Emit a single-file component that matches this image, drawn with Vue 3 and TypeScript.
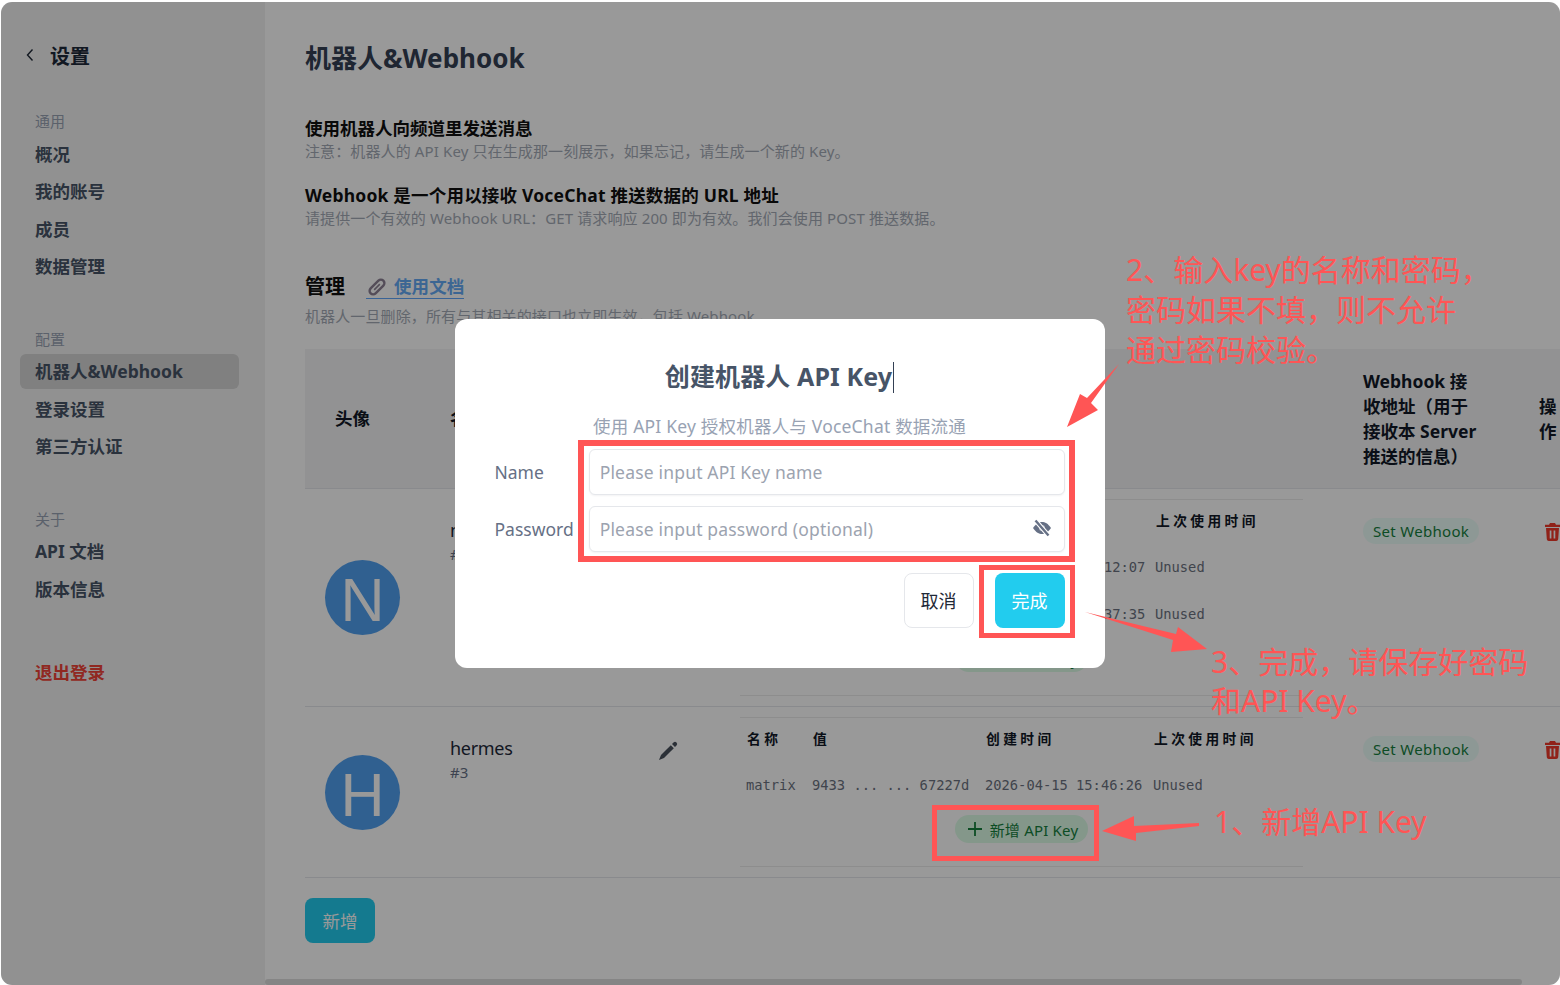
<template>
  <div class="page">
    <div class="window">
      <aside class="sidebar">
        <div class="back">
          <svg width="10" height="14" viewBox="0 0 10 14"><path d="M7.5 1.5 2.5 7l5 5.500" fill="none" stroke="#1f2937" stroke-width="1.400" /></svg>
          <span>设置</span>
        </div>
        <div v-for="group in navGroups" :key="group.title" class="nav-group">
          <div class="nav-title">{{ group.title }}</div>
          <div v-for="item in group.items" :key="item" class="nav-item" :class="{ active: item === '机器人&Webhook' }">{{ item }}</div>
        </div>
        <div class="logout">退出登录</div>
      </aside>

      <main class="main">
        <h1>机器人&amp;Webhook</h1>
        <section class="tip first">
          <h2>使用机器人向频道里发送消息</h2>
          <p>注意：机器人的 API Key 只在生成那一刻展示，如果忘记，请生成一个新的 Key。</p>
        </section>
        <section class="tip">
          <h2>Webhook 是一个用以接收 VoceChat 推送数据的 URL 地址</h2>
          <p>请提供一个有效的 Webhook URL：GET 请求响应 200 即为有效。我们会使用 POST 推送数据。</p>
        </section>
        <div class="manage">
          <h3>管理</h3>
          <a class="doc-link">
            <svg width="20" height="20" viewBox="0 0 20 20" fill="none" stroke="#8d8194" stroke-width="2.400">
              <g transform="rotate(-45 10 10)">
                <rect x="1" y="6.500" width="18" height="7" rx="3.500" />
                <path d="M6 10h8" stroke-width="1.600" />
              </g>
            </svg>
            <span>使用文档</span>
          </a>
        </div>
        <p class="manage-note">机器人一旦删除，所有与其相关的接口也立即生效，包括 Webhook。</p>

        <div class="bots">
          <div class="bot-row head">
            <div class="cell-avatar">头像</div>
            <div>名称</div>
            <div>API Key</div>
            <div class="head-webhook">Webhook 接收地址（用于接收本 Server 推送的信息）</div>
            <div class="head-op">操作</div>
          </div>
          <div v-for="bot in bots" :key="bot.id" class="bot-row">
            <div class="cell-avatar"><div class="avatar">{{ bot.initial }}</div></div>
            <div class="cell-name">
              <div>
                <div class="bot-name">{{ bot.name }}</div>
                <div class="bot-id">#{{ bot.id }}</div>
              </div>
              <svg class="pencil" width="20" height="20" viewBox="0 0 20 20" fill="#48505c">
                <path d="M12.800 4.200 15.800 7.200 6 17 1 19 3 14Z" />
                <path d="M14 3 15.500 1.500a2.100 2.100 0 0 1 3 3L17 6Z" />
              </svg>
            </div>
            <div class="cell-keys">
              <div class="keys">
                <div class="key-line key-head" :style="{ gridTemplateColumns: bot.cols }">
                  <span>名称</span><span>值</span><span>创建时间</span><span>上次使用时间</span>
                </div>
                <div v-for="k in bot.keys" :key="k.name" class="key-line key-row" :style="{ gridTemplateColumns: bot.cols }">
                  <span>{{ k.name }}</span><span>{{ k.value }}</span><span>{{ k.created }}</span><span>Unused</span>
                </div>
                <div class="key-add">
                  <span class="add-pill">
                    <svg width="14" height="14" viewBox="0 0 14 14" stroke="#15803d" stroke-width="1.800"><path d="M7 0v14M0 7h14" /></svg>
                    新增 API Key
                  </span>
                </div>
              </div>
            </div>
            <div class="cell-webhook"><span class="webhook-pill">Set Webhook</span></div>
            <div class="cell-op">
              <svg width="15" height="18" viewBox="0 0 15 18" fill="#f0392b">
                <path d="M5 0h5l1 1.800h4V4H0V1.800h4Z" />
                <path fill-rule="evenodd" d="M1 5h13l-.8 11.200A2 2 0 0 1 11.200 18H3.800a2 2 0 0 1-2-1.800Zm3.700 2.500v8h1.700v-8Zm3.900 0v8h1.700v-8Z" />
              </svg>
            </div>
          </div>
        </div>

        <button type="button" class="add-bot">新增</button>
        <div class="scroll-thumb"></div>
      </main>

      <div class="overlay">
        <div class="modal">
          <h4>创建机器人 API Key<i class="caret"></i></h4>
          <p class="modal-sub">使用 API Key 授权机器人与 VoceChat 数据流通</p>
          <div class="form">
            <label>Name</label>
            <input placeholder="Please input API Key name" />
            <label>Password</label>
            <div class="pwd">
              <input placeholder="Please input password (optional)" />
              <svg class="eye" width="20" height="18" viewBox="0 0 20 18">
                <path d="M1 9C4 4.500 7 3 10 3s6 1.500 9 6c-3 4.500-6 6-9 6s-6-1.500-9-6Z" fill="#667085" />
                <circle cx="10" cy="9" r="3" fill="#b9bec8" />
                <path d="M3.500 1.500 16.500 16.500" stroke="#fff" stroke-width="4.500" />
                <path d="M3.500 1.500 16.500 16.500" stroke="#667085" stroke-width="2.400" />
              </svg>
            </div>
          </div>
          <div class="actions">
            <button type="button" class="btn-cancel">取消</button>
            <button type="button" class="btn-done">完成</button>
          </div>
        </div>
      </div>
    </div>

    <svg class="marks" width="1560" height="985" viewBox="0 0 1560 985">
      <g fill="none" stroke="#ff5555">
        <rect x="581" y="443" width="491" height="116" stroke-width="6" />
        <rect x="981.500" y="567.500" width="91" height="68" stroke-width="5" />
        <rect x="934.500" y="807.500" width="162" height="51" stroke-width="5" />
      </g>
      <g fill="#ff5555">
        <polygon points="1119,364 1087,398 1080,394 1067,427 1098,410 1091,403" />
        <polygon points="1085,612 1176,634 1178,627 1207,649 1171,652 1173,640" />
        <polygon points="1102,831 1134,816 1134,826 1199,823 1199,826 1136,833 1136,841" />
      </g>
    </svg>
    <div class="note note-two">2、输入key的名称和密码，<br />密码如果不填，则不允许<br />通过密码校验。</div>
    <div class="note note-three">3、完成，请保存好密码<br />和API Key。</div>
    <div class="note note-one">1、新增API Key</div>
  </div>
</template>

<script setup lang="ts">
const navGroups = [
  { title: '通用', items: ['概况', '我的账号', '成员', '数据管理'] },
  { title: '配置', items: ['机器人&Webhook', '登录设置', '第三方认证'] },
  { title: '关于', items: ['API 文档', '版本信息'] },
];

const bots = [
  {
    id: 2,
    initial: 'N',
    name: 'n8n',
    cols: '66px 176px 167px 1fr',
    keys: [
      { name: 'main', value: '5f21 ... ... 90ab1c', created: '2026-04-15 15:12:07' },
      { name: 'test', value: '7c0e ... ... 41d2aa', created: '2026-04-15 15:37:35' },
    ],
  },
  {
    id: 3,
    initial: 'H',
    name: 'hermes',
    cols: '66px 173px 168px 1fr',
    keys: [{ name: 'matrix', value: '9433 ... ... 67227d', created: '2026-04-15 15:46:26' }],
  },
];
</script>

<style>
html, body { margin: 0; background: #fff; }
</style>

<style scoped>
.page {
  position: relative;
  box-sizing: border-box;
  width: 1560px;
  height: 985px;
  padding: 2px 0 0 1px;
  overflow: hidden;
  font-family: "Noto Sans", "Noto Sans CJK SC", sans-serif;
  color: #111827;
}
.window {
  position: relative;
  display: flex;
  height: 100%;
  background: #fff;
  border-radius: 11px;
  overflow: hidden;
}

.sidebar {
  flex: 0 0 264px;
  box-sizing: border-box;
  padding: 0 26px 0 19px;
  background: #f2f2f2;
}
.back {
  display: flex;
  align-items: center;
  gap: 15px;
  height: 36px;
  margin: 35px 0 0 5px;
  font-size: 20px;
  font-weight: 700;
  color: #1d2939;
}
.nav-group { margin-top: 44.500px; }
.back + .nav-group { margin-top: 38px; }
.nav-title {
  height: 20px;
  padding-left: 15px;
  font-size: 15px;
  line-height: 20px;
  color: #98a2b3;
}
.nav-item {
  height: 35px;
  margin-top: 2.500px;
  padding-left: 15px;
  border-radius: 6px;
  font-size: 17.500px;
  font-weight: 700;
  line-height: 35px;
  color: #475467;
}
.nav-title + .nav-item { margin-top: 5.500px; }
.nav-item.active { background: #d5d5d5; }
.logout {
  margin-top: 48px;
  padding-left: 15px;
  font-size: 17.500px;
  font-weight: 700;
  line-height: 35px;
  color: #f04438;
}

.main {
  position: relative;
  flex: 1;
  min-width: 0;
  padding: 0 0 0 40px;
  overflow: hidden;
}
h1 {
  margin: 37px 0 0;
  font-size: 26px;
  font-weight: 700;
  line-height: 38px;
  color: #344054;
}
.tip { margin-top: 21px; }
.tip.first { margin-top: 39px; }
.tip h2 {
  margin: 0;
  font-size: 17.500px;
  font-weight: 700;
  line-height: 25px;
  color: #101010;
}
.tip + .tip h2 { letter-spacing: .2px; }
.tip p, .manage-note {
  margin: 0;
  font-size: 15px;
  line-height: 22px;
  letter-spacing: .12px;
  color: #a4abb6;
}
.tip p { margin-top: -1px; }
.manage {
  display: flex;
  align-items: center;
  gap: 21px;
  margin-top: 43px;
}
.manage h3 {
  margin: 0;
  font-size: 20px;
  font-weight: 700;
  line-height: 30px;
  color: #101010;
}
.doc-link {
  display: flex;
  align-items: center;
  gap: 7px;
  border-bottom: 1px solid #60a5fa;
  font-size: 17.500px;
  font-weight: 700;
  line-height: 23px;
  letter-spacing: .1px;
  color: #65aaf5;
}
.doc-link svg { margin-left: 1px; }
.manage-note { margin-top: 3px; }

.bots {
  width: 1320px;
  margin-top: 22px;
}
.bot-row {
  display: grid;
  grid-template-columns: 145px 290px 563px 236px 86px;
  border-bottom: 1px solid #e5e7eb;
}
.bot-row.head {
  height: 139px;
  align-items: center;
  background: #f3f4f6;
  font-size: 17.500px;
  font-weight: 700;
  line-height: 25px;
}
.head .cell-avatar { padding-left: 30px; }
.head-webhook { width: 118px; padding-left: 60px; }
.head-op { width: 20px; }
.cell-avatar {
  display: flex;
  align-items: center;
  padding-left: 20px;
}
.avatar {
  width: 75px;
  height: 75px;
  border-radius: 50%;
  background: #50a0f0;
  color: #fff;
  font-family: "Liberation Sans", sans-serif;
  font-size: 61px;
  line-height: 80px;
  text-align: center;
}
.cell-name {
  display: flex;
  justify-content: space-between;
  padding: 29px 62px 0 0;
}
.bot-name {
  font-size: 18px;
  line-height: 25px;
  letter-spacing: -0.3px;
  color: #1d2939;
}
.bot-id {
  font-size: 15px;
  line-height: 22px;
  color: #667085;
}
.pencil { margin-top: 5px; }
.cell-keys { padding: 10px 0; }
.keys {
  border-top: 1px solid #ececec;
  border-bottom: 1px solid #ececec;
  font-family: "DejaVu Sans Mono", "Noto Sans CJK SC", monospace;
  font-size: 13.750px;
}
.key-line {
  display: grid;
  align-items: center;
  padding-left: 6px;
}
.key-head {
  box-sizing: border-box;
  height: 43px;
  padding: 0 0 4px 7px;
  font-weight: 700;
  letter-spacing: 3.400px;
  color: #111827;
}
.key-row {
  height: 47px;
  color: #6b7280;
  white-space: nowrap;
}
.key-add {
  display: flex;
  justify-content: center;
  padding: 7px 0 23px;
}
.add-pill {
  display: flex;
  align-items: center;
  gap: 8px;
  height: 28px;
  padding: 0 10px 0 13px;
  border-radius: 14px;
  background: #dcfce7;
  color: #15803d;
  font-family: "Noto Sans", "Noto Sans CJK SC", sans-serif;
  font-size: 15px;
  letter-spacing: .2px;
}
.cell-webhook { padding: 29px 0 0 60px; }
.webhook-pill {
  display: inline-block;
  height: 26px;
  padding: 0 10px;
  border-radius: 13px;
  background: #ecfdf9;
  color: #15803d;
  font-size: 15px;
  line-height: 26px;
  letter-spacing: .3px;
}
.cell-op { padding: 34px 0 0 6px; }

.add-bot {
  display: block;
  width: 70px;
  height: 45px;
  margin-top: 20px;
  padding: 0;
  border: 0;
  border-radius: 8px;
  background: #22ccee;
  color: #fff;
  font: inherit;
  font-size: 17.500px;
}
.scroll-thumb {
  position: absolute;
  left: 0;
  bottom: 0;
  width: 1257px;
  height: 6px;
  border-radius: 3px;
  background: #dedede;
}

.overlay {
  position: absolute;
  inset: 0;
  display: flex;
  align-items: center;
  justify-content: center;
  background: rgba(0, 0, 0, .4);
}
.modal {
  box-sizing: border-box;
  width: 650px;
  height: 349px;
  margin: -1px 0 0 -2px;
  padding: 39px 40px 40px;
  border-radius: 12px;
  background: #fff;
  text-align: center;
}
h4 {
  margin: 0;
  font-size: 25px;
  font-weight: 700;
  line-height: 36px;
  letter-spacing: .12px;
  color: #475467;
}
.caret {
  display: inline-block;
  width: 1px;
  height: 31px;
  margin-left: 1px;
  background: #344054;
  vertical-align: -7px;
}
.modal-sub {
  margin: 19px 0 10px;
  font-size: 17.500px;
  line-height: 26px;
  letter-spacing: .2px;
  color: #98a2b3;
}
.form {
  display: grid;
  grid-template-columns: auto 1fr;
  align-items: center;
  gap: 11px 15px;
  text-align: left;
}
label {
  font-size: 17.500px;
  color: #667085;
}
input {
  display: block;
  box-sizing: border-box;
  width: 100%;
  height: 46px;
  padding: 0 10px;
  border: 1px solid #e5e7eb;
  border-radius: 6px;
  outline: none;
  box-shadow: 0 1px 2px rgba(16, 24, 40, .05);
  font: inherit;
  font-size: 17.500px;
  letter-spacing: .18px;
}
input::placeholder { color: #9ca3af; }
.pwd { position: relative; }
.eye {
  position: absolute;
  right: 13px;
  top: 13px;
}
.actions {
  display: flex;
  justify-content: flex-end;
  gap: 21px;
  margin-top: 21px;
}
.actions button {
  width: 70px;
  height: 55px;
  padding: 0;
  border-radius: 8px;
  font: inherit;
  font-size: 18px;
}
.btn-cancel {
  border: 1px solid #e5e7eb;
  background: #fff;
  color: #1f2937;
}
.btn-done {
  border: 0;
  background: #22ccee;
  color: #fff;
}

.marks {
  position: absolute;
  left: 0;
  top: 0;
}
.note {
  position: absolute;
  font-size: 30px;
  line-height: 40px;
  color: #ff5555;
  white-space: nowrap;
}
.note-two { left: 1126px; top: 250px; }
.note-three { left: 1211px; top: 642px; line-height: 39px; }
.note-one { left: 1214px; top: 802px; }
</style>
